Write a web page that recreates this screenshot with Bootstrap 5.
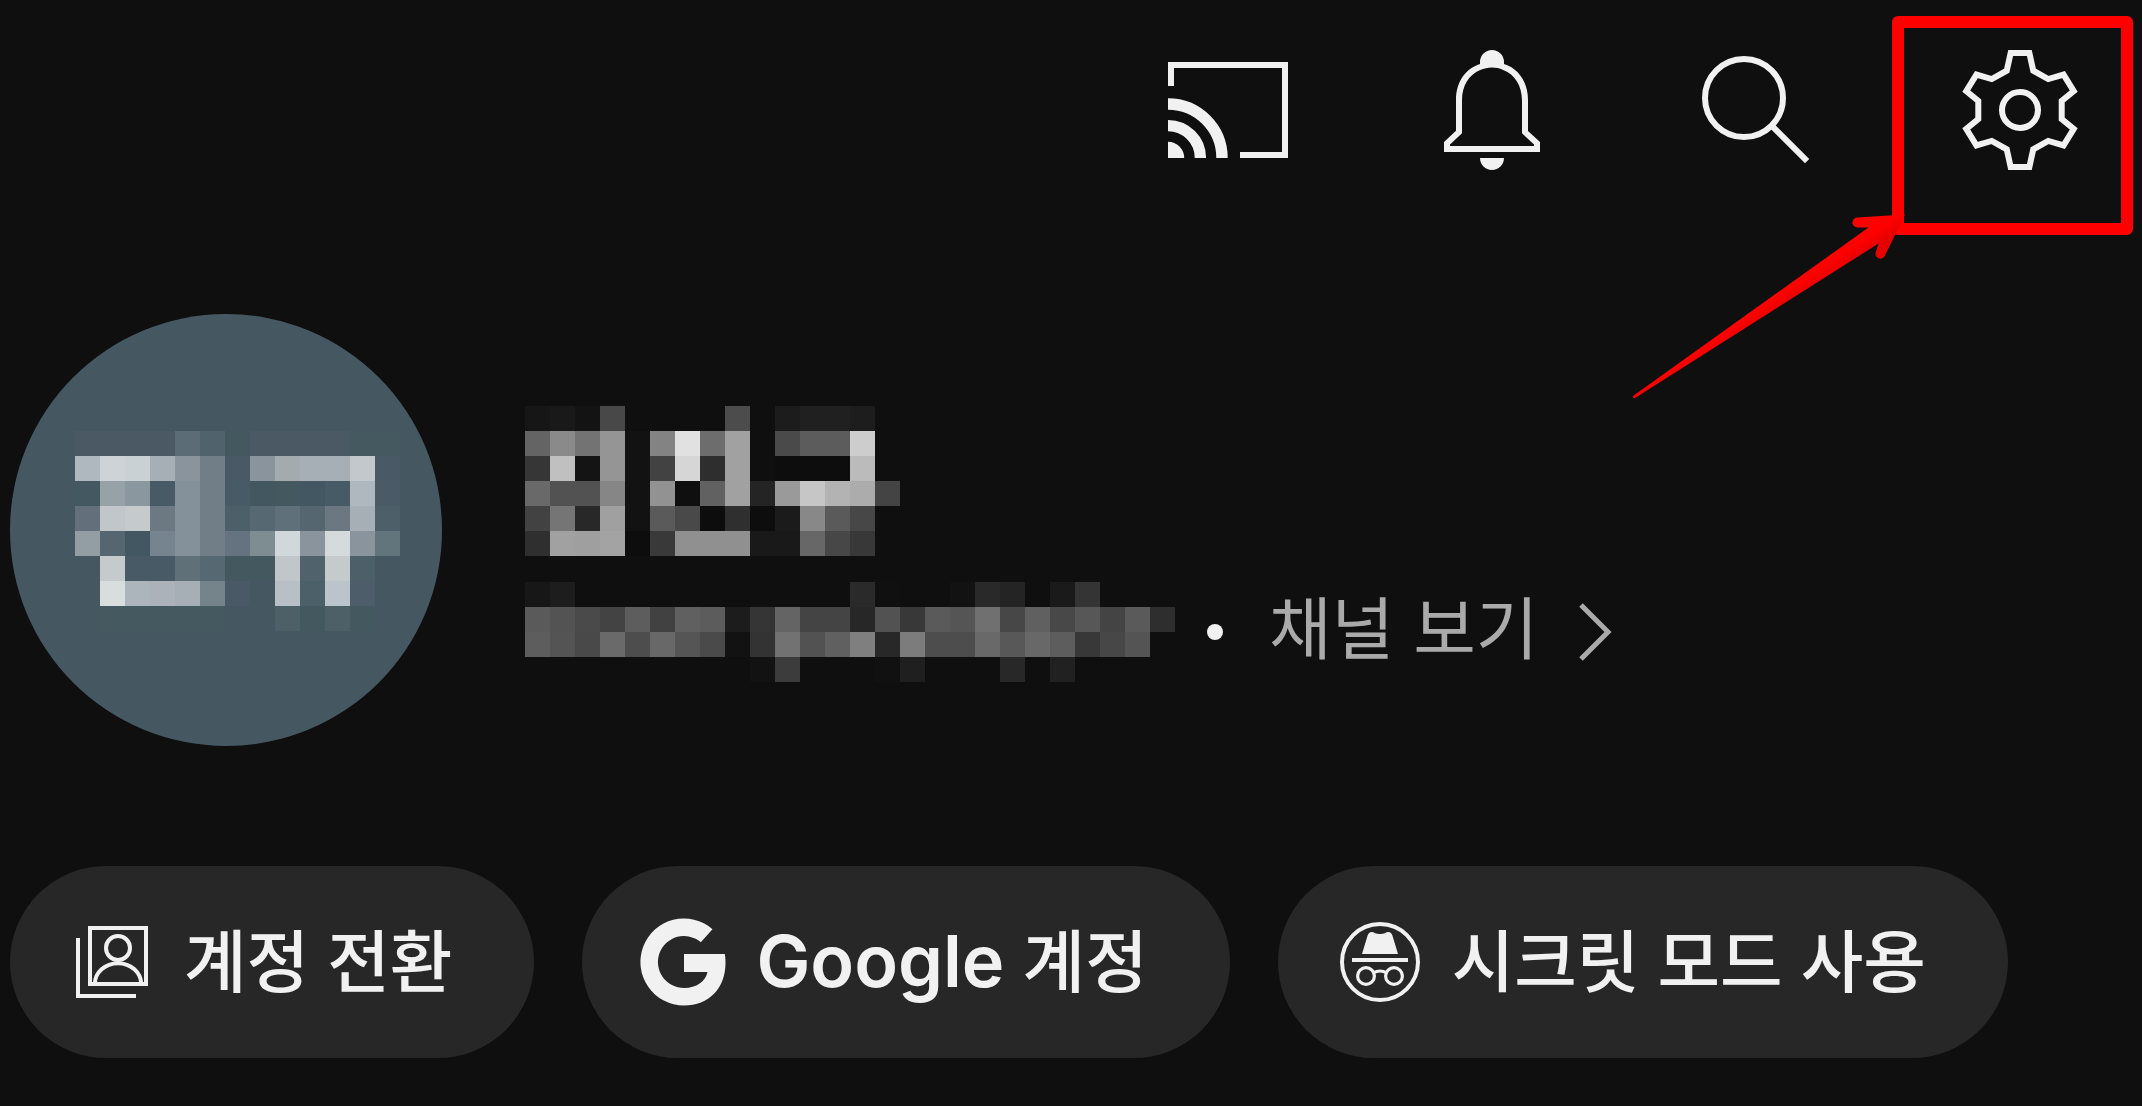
<!DOCTYPE html>
<html lang="ko">
<head>
<meta charset="utf-8">
<meta name="viewport" content="width=device-width, initial-scale=1">
<title>내 페이지</title>
<link href="https://cdn.jsdelivr.net/npm/bootstrap@5.3.0/dist/css/bootstrap.min.css" rel="stylesheet">
<style>
  body { background: #0f0f0f; color: #f1f1f1; font-family: Inter, "Noto Sans CJK KR", sans-serif; overflow-x: hidden; }
  svg { display: block; flex: none; }
  .top-bar { padding: 38px 50px 0 0; gap: 120px; }
  .tool-btn { display: block; color: #f1f1f1; background: none; border: 0; padding: 0; }
  .tool-btn svg { width: 144px; height: 144px; }
  .focus-frame { top: -22px; left: -56px; width: 241px; height: 219px; border: 12px solid #f00; border-radius: 6px; pointer-events: none; }
  .focus-arrow { top: 172px; left: -318px; pointer-events: none; }
  .profile { padding: 132px 10px 0; gap: 83px; }
  .avatar { width: 432px; height: 432px; background: #455862; padding: 117px 0 0 65px; }
  .identity { padding-top: 92px; gap: 26px; }
  .handle-row { height: 100px; }
  .sep-dot { width: 16px; height: 16px; background: #f1f1f1; margin: 0 46px 0 32px; }
  .channel-link { height: 100px; color: #aaa; font-family: "Noto Sans CJK KR", sans-serif; font-size: 68px; line-height: 86px; gap: 40px; }
  .channel-link:hover { color: #ccc; }
  .actions { padding: 120px 10px 48px; gap: 48px; }
  .pill-btn { height: 192px; padding: 0 82px 0 54px; gap: 24px; background: #272727; color: #f1f1f1; border: 0; font-size: 68px; font-weight: 500; line-height: 96px; white-space: nowrap; }
  .pill-btn svg { width: 96px; height: 96px; }
  .latin-word { font-size: 72px; line-height: 1; }
</style>
<script src="https://cdn.jsdelivr.net/npm/bootstrap@5.3.0/dist/js/bootstrap.bundle.min.js" defer></script>
</head>
<body>
<header class="top-bar d-flex justify-content-end align-items-start">
  <button class="tool-btn" type="button" aria-label="전송">
    <svg viewBox="0 0 24 24" fill="none" stroke="currentColor"><path d="M2.5 8V4.5h19v15H14"/><path d="M2 11A9 9 0 0 1 11 20M2 14.6A5.4 5.4 0 0 1 7.4 20" stroke-width="1.9"/><path d="M2 17.3A2.7 2.7 0 0 1 4.7 20H2z" fill="currentColor" stroke="none"/></svg>
  </button>
  <button class="tool-btn" type="button" aria-label="알림">
    <svg viewBox="0 0 24 24" fill="currentColor"><path d="M10 20h4c0 1.1-.9 2-2 2s-2-.9-2-2zm10-2.65V19H4v-1.65l2-1.88v-5.15C6 7.4 7.56 5.1 10 4.34V4a2 2 0 0 1 4 0v.35c2.44.75 4 3.06 4 5.98v5.15l2 1.87zm-1 .42l-2-1.88v-5.47c0-2.47-1.19-4.36-3.13-5.1-1.26-.53-2.64-.5-3.84.03C8.15 6.11 7 7.99 7 10.42v5.47l-2 1.88V18h14v-.23z"/></svg>
  </button>
  <button class="tool-btn" type="button" aria-label="검색">
    <svg viewBox="0 0 24 24" fill="none" stroke="currentColor"><circle cx="10" cy="10" r="6.5"/><path d="M14.6 14.6l5.92 5.92"/></svg>
  </button>
  <div class="position-relative">
    <button class="tool-btn" type="button" aria-label="설정">
      <svg viewBox="0 0 24 24" fill="none" stroke="currentColor"><circle cx="12" cy="12" r="3"/><path d="M10.44 2.5h3.12l.65 2.95 2.5 1.4 2.55-.75 1.7 2.75-2.01 1.65v3l2.01 1.65-1.7 2.75-2.55-.75-2.5 1.4-.65 2.95h-3.12l-.65-2.95-2.5-1.4-2.55.75-1.7-2.75 2.01-1.65v-3L3.04 8.85l1.7-2.75 2.55.75 2.5-1.4z"/></svg>
    </button>
    <div class="focus-frame position-absolute"></div>
    <svg class="focus-arrow position-absolute" width="276" height="190" viewBox="0 0 276 190" aria-hidden="true">
      <defs><linearGradient id="arrowShade" gradientUnits="userSpaceOnUse" x1="130" y1="87" x2="142" y2="105"><stop offset=".45" stop-color="#f00"/><stop offset="1" stop-color="#e60000"/></linearGradient></defs>
      <path fill="url(#arrowShade)" d="M3 186 238.500 17.500H227.500A5 5 0 0 1 227.500 7.500L275 4.500 254.500 46.500A5 5 0 0 1 245.500 43L248.500 33.500 5 188A1.500 1.500 0 0 1 3 186z"/>
    </svg>
  </div>
</header>

<main>
  <section class="profile d-flex align-items-start">
    <div class="avatar rounded-circle flex-shrink-0"><svg data-mosaic="avatar" role="img" aria-label="프로필 사진"></svg></div>
    <div class="identity d-flex flex-column">
      <svg data-mosaic="name" role="img" aria-label="이름"></svg>
      <div class="handle-row d-flex align-items-center">
        <svg data-mosaic="handle" role="img" aria-label="핸들"></svg>
        <span class="sep-dot rounded-circle"></span>
        <a class="channel-link d-flex align-items-center text-decoration-none text-nowrap" href="#"><span class="align-self-start">채널 보기</span>
          <svg width="36" height="60" viewBox="0 0 36 60" fill="none" stroke="currentColor" stroke-width="5"><path d="M3 3l27 27L3 57"/></svg></a>
      </div>
    </div>
  </section>

  <section class="actions d-flex">
    <button class="pill-btn rounded-pill d-flex align-items-center" type="button">
      <svg viewBox="0 0 24 24" fill="none" stroke="currentColor"><path d="M3.500 6v14.500H18M6.500 3.500h14v14h-14z"/><circle cx="13.500" cy="8.500" r="3"/><path d="M7.700 17.500a5.800 5.200 0 0 1 11.600 0"/></svg>
      <span>계정 전환</span>
    </button>
    <button class="pill-btn rounded-pill d-flex align-items-center" type="button">
      <svg viewBox="0 0 96 96" fill="currentColor"><path d="M76.500 15.200A43.500 43.500 0 1 0 48 91.500C73 91.500 89.500 74 89.500 49c0-3.500-.2-6.500-.7-9H48v18h23.500c-2 9.500-11 16-23.500 16a26 26 0 1 1 16.800-45.800z"/></svg>
      <span><span class="latin-word fw-semibold">Google</span> 계정</span>
    </button>
    <button class="pill-btn rounded-pill d-flex align-items-center" type="button">
      <svg viewBox="0 0 24 24" fill="none" stroke="currentColor"><circle cx="12" cy="12" r="9.500"/><path d="M5 11.500h14"/><circle cx="8.500" cy="15.500" r="2.100" stroke-width=".8"/><circle cx="15.500" cy="15.500" r="2.100" stroke-width=".8"/><path d="M10.300 14.700q1.700-.9 3.400 0" stroke-width=".8"/><path fill="currentColor" stroke="none" d="M7.500 10l1.400-4.600q.3-.9 1-.9.500 0 .9.300.4.200 1.200.2t1.200-.2q.4-.3.900-.3.700 0 1 .9L16.500 10z"/></svg>
      <span>시크릿 모드 사용</span>
    </button>
  </section>
</main>

<script>
  // Pixelated blocks: one entry per 25px cell; two digits are a grey level, "-" is left empty.
  const mosaics = {
    avatar: [
      "4a5964 4a5964 4a5964 4a5964 5c6c76 50626b 445860 4a5964 4a5964 4a5964 4a5964 455a60 455a60",
      "afb8bf cdd3d6 c9d1d5 a6aeb6 8a949d 717e87 495a66 8a949c a3abae a6aeb6 a6aeb6 c3c8cc 495a66",
      "445862 97a2a8 8a979f 485a66 84919a 717e87 475b66 435760 445860 435762 475b66 b0b8bf 4a5a66",
      "63707b c1c6cb c5cacd 6c7982 84919a 717e87 4b6068 566871 5f707a 566670 6b7881 a6aeb6 4d5f69",
      "929da4 566670 435762 768490 84919a 717e87 657280 7e8d92 d0d8db 8a949d d5dadd 8a949d 62757c",
      "- c5cacd 485a66 485a66 5f7078 566871 445860 445860 c1c6cb 50626b c5cacd 4b6068 -",
      "- d8dddd acb4bc acb2ba a6aeb6 75838b 495a66 - b9bfc7 4b6068 bbc3cb 4d5d69 -",
      "- 455a60 455a60 455a60 455a60 455a60 - - 4d6068 445860 4d6068 445860 -"
    ],
    name: [
      "16 19 13 48 - - - - 4c - 1c 20 20 1d -",
      "64 8a 73 95 12 83 e1 6d a1 - 4a 5c 5c cd -",
      "36 c0 14 95 12 42 d6 2e a1 - 0d 0d 0d bb -",
      "69 52 52 86 12 92 - 61 a1 24 9a c6 b3 ac 44",
      "42 75 28 a0 12 5a 49 0d 2f 0d 1b 88 5a 47 -",
      "2f a1 9f a3 0d 39 90 90 90 19 19 67 47 38 -"
    ],
    handle: [
      "17 1d - - - - - - - - - - - 2a 10 - - 12 29 24 - 1a 34 - - -",
      "5a 53 4a 43 5d 41 60 5c 1c 35 64 44 44 27 52 38 5a 55 70 47 60 48 57 44 5a 2e",
      "5d 54 49 6a 4d 68 55 4a 12 33 72 52 60 7f 28 7c 4d 4d 69 58 68 5d 38 47 54 -",
      "- - - - - - - - - 12 3c - - - 11 1f - - - 28 - 21 - - - -"
    ]
  };
  document.querySelectorAll("[data-mosaic]").forEach(svg => {
    const rows = mosaics[svg.dataset.mosaic].map(r => r.split(" "));
    svg.setAttribute("width", rows[0].length * 25);
    svg.setAttribute("height", rows.length * 25);
    svg.innerHTML = rows.map((r, y) => r.map((c, x) => c === "-" ? "" :
      `<rect x="${x * 25}" y="${y * 25}" width="25" height="25" fill="#${c.length === 2 ? c + c + c : c}"/>`).join("")).join("");
  });
</script>
</body>
</html>
